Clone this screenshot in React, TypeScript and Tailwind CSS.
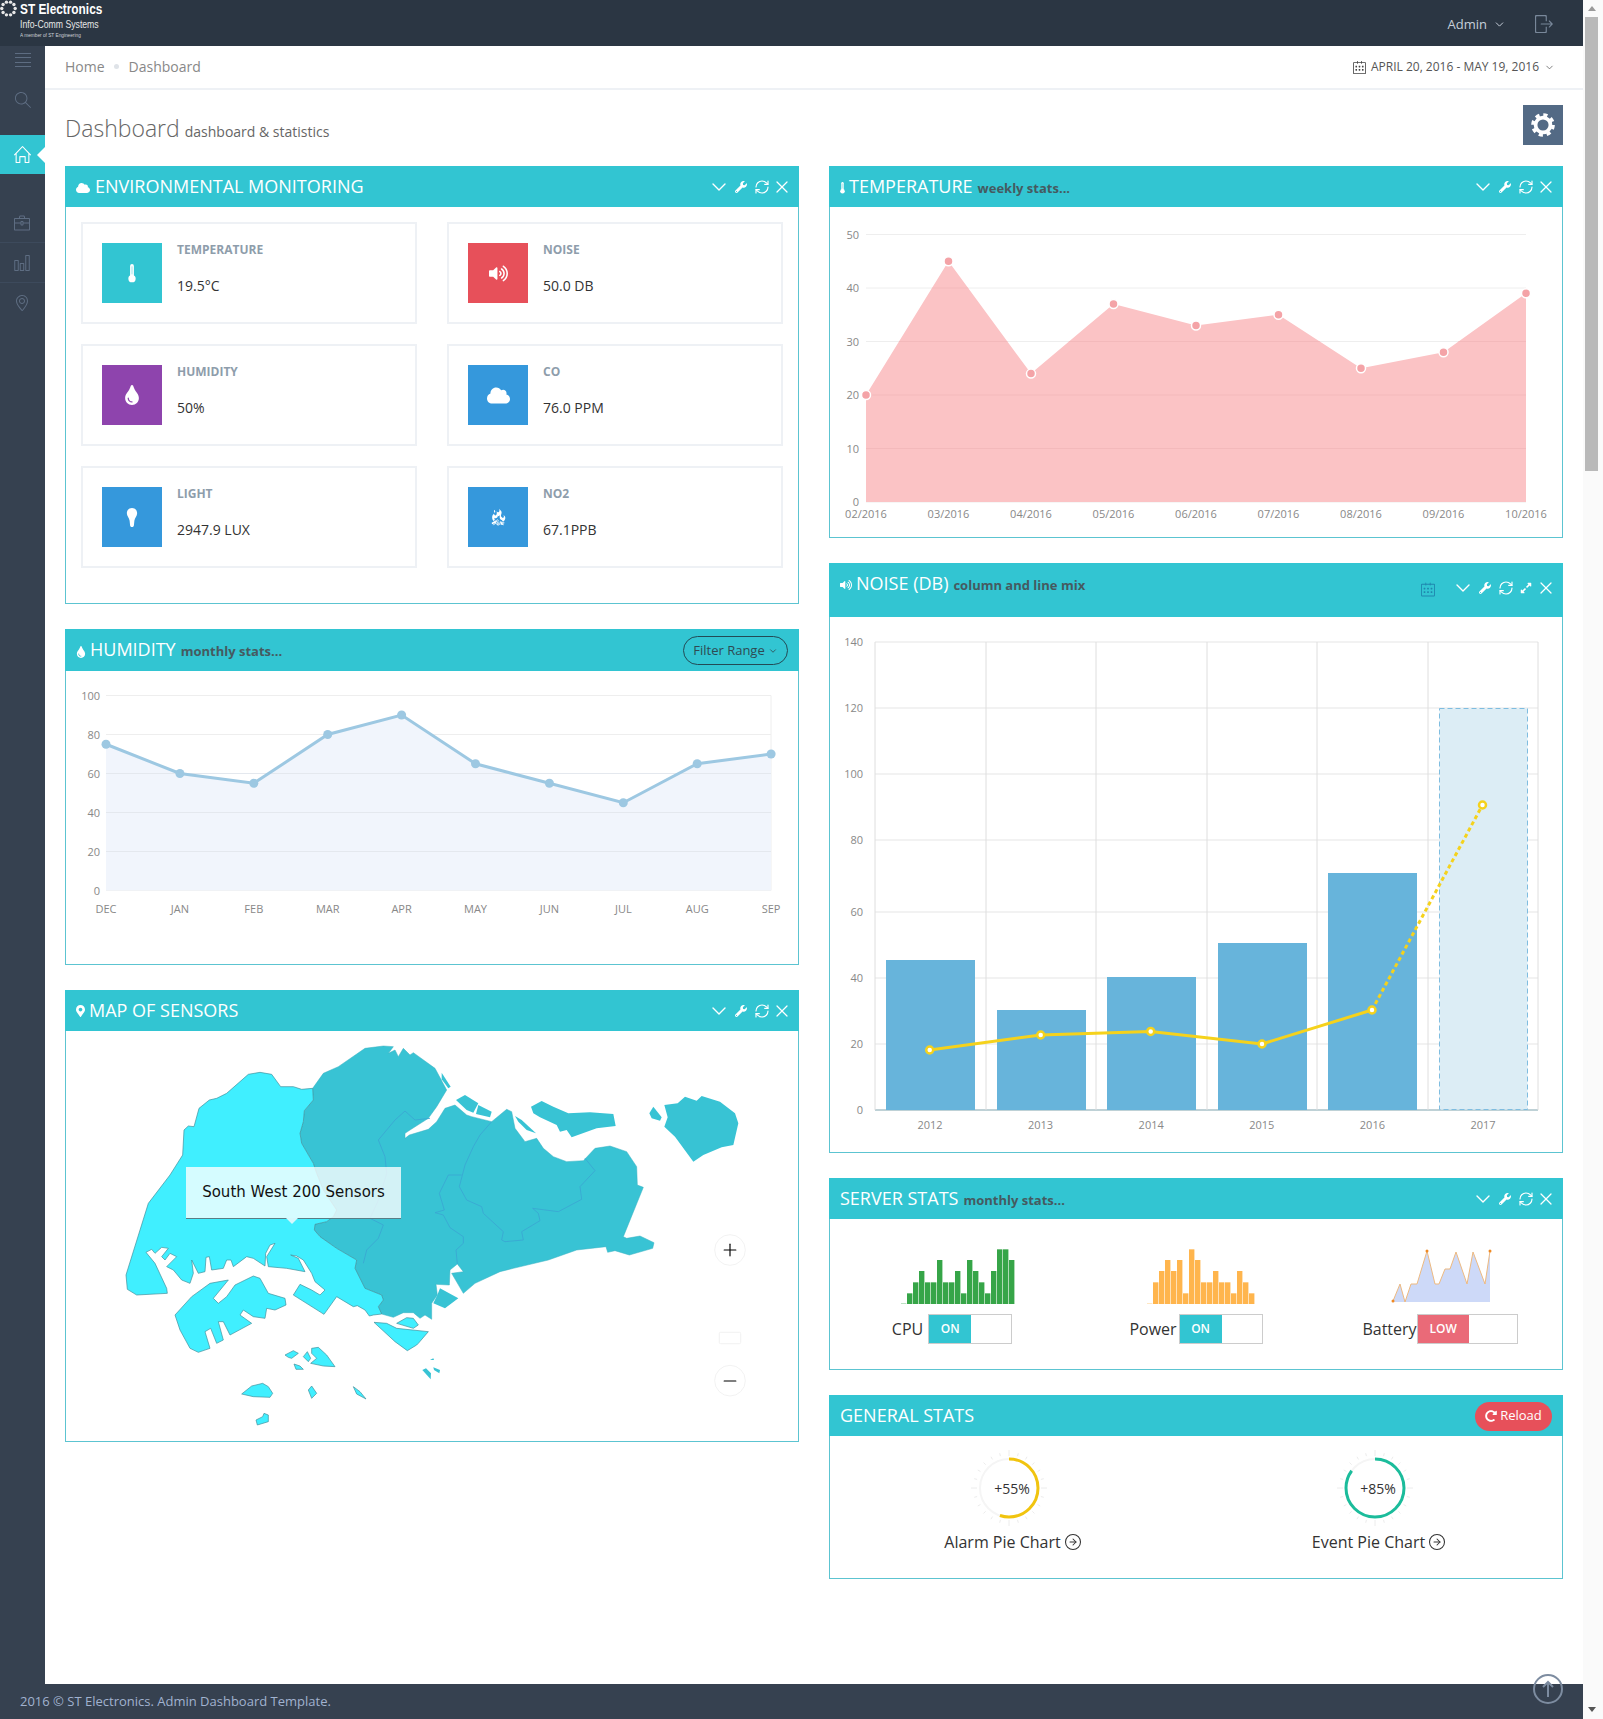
import React from "react";
import { ChevronDown, CircleArrowRight, Minus, Plus, RefreshCw, X } from "lucide-react";
import { FaCloud, FaExpandAlt, FaMapMarkerAlt, FaRedoAlt, FaTint, FaVolumeUp, FaWrench } from "react-icons/fa";
import { GiCampfire } from "react-icons/gi";
import { SlBriefcase, SlCalender, SlChart, SlHome, SlLocationPin, SlLogout, SlMagnifier } from "react-icons/sl";

const Thermometer = ({ className = "" }: { className?: string }) => (
  <svg viewBox="0 0 10 24" className={className} fill="currentColor">
    <rect x="2.6" y="0" width="4.8" height="17" rx="2.4" />
    <circle cx="5" cy="18.5" r="4.6" />
    <rect x="4.4" y="3" width="1.2" height="10" fill="#32c5d2" opacity="0.5" />
  </svg>
);

const Bulb = ({ className = "" }: { className?: string }) => (
  <svg viewBox="0 0 14 24" className={className} fill="currentColor">
    <path d="M7 0C3 0 .5 3 .5 6.5c0 3.5 3 6 3.5 9.500L4.500 21c0 2 1 3 2.500 3s2.500-1 2.500-3l.5-5c.5-3.500 3.500-6 3.500-9.500C13.500 3 11 0 7 0z" />
  </svg>
);

const Gear = () => (
  <svg viewBox="0 0 28 28" className="w-[26px] h-[26px]" fill="none" stroke="#fff">
    <circle cx="14" cy="14" r="8" strokeWidth="4" />
    <circle cx="14" cy="14" r="11" strokeWidth="3.500" strokeDasharray="4.500 4.140" />
  </svg>
);

const Tools = ({ expand = false }: { expand?: boolean }) => (
  <div className="flex items-center text-white -mr-[4px]">
    <div className="w-[25px] flex justify-center">
      <ChevronDown className="w-[24px] h-[24px] shrink-0" strokeWidth={1.4} />
    </div>
    <div className="w-[20px] flex justify-center">
      <FaWrench className="w-[12px] h-[12px]" />
    </div>
    <div className="w-[21px] flex justify-center">
      <RefreshCw className="w-[16px] h-[16px] shrink-0" strokeWidth={1.7} />
    </div>
    {expand && (
      <div className="w-[20px] flex justify-center">
        <FaExpandAlt className="w-[12px] h-[12px]" />
      </div>
    )}
    <div className="w-[20px] flex justify-center">
      <X className="w-[20px] h-[20px] shrink-0" strokeWidth={1.5} />
    </div>
  </div>
);

type PortletProps = {
  icon?: React.ReactNode;
  title: string;
  sub?: string;
  right?: React.ReactNode;
  headerClass?: string;
  children: React.ReactNode;
};

const Portlet = ({ icon, title, sub, right, headerClass = "h-[41px]", children }: PortletProps) => (
  <div className="border border-[#5cc4d1] pb-px mb-[25px]">
    <div className={`-mx-px -mt-px bg-[#32c5d2] flex justify-between pl-[11px] pr-[11px] ${headerClass}`}>
      <div className="flex items-center h-[41px]">
        {icon}
        <span className="text-white text-[18px]">{title}</span>
        {sub && <span className="text-[13px] font-bold text-[#455a60] ml-[5px] mt-[4px]">{sub}</span>}
      </div>
      <div className="flex items-center h-[41px]">{right || <Tools />}</div>
    </div>
    {children}
  </div>
);

const stats = [
  { name: "TEMPERATURE", value: "19.5°C", color: "bg-[#32c5d2]", icon: <Thermometer className="w-[10px] h-[19px]" /> },
  { name: "NOISE", value: "50.0 DB", color: "bg-[#e7505a]", icon: <FaVolumeUp className="w-[19px] h-[19px]" /> },
  { name: "HUMIDITY", value: "50%", color: "bg-[#8e44ad]", icon: <FaTint className="w-[20px] h-[20px]" /> },
  { name: "CO", value: "76.0 PPM", color: "bg-[#3598dc]", icon: <FaCloud className="w-[23px] h-[23px]" /> },
  { name: "LIGHT", value: "2947.9 LUX", color: "bg-[#3598dc]", icon: <Bulb className="w-[12px] h-[19px]" /> },
  { name: "NO2", value: "67.1PPB", color: "bg-[#3598dc]", icon: <GiCampfire className="w-[18px] h-[18px]" /> },
];

const EnvCard = ({ s }: { s: (typeof stats)[number] }) => (
  <div className="border-2 border-[#eef1f5] h-[102px] p-[19px] flex">
    <div className={`w-[60px] h-[60px] flex items-center justify-center text-white ${s.color}`}>{s.icon}</div>
    <div className="ml-[15px]">
      <div className="text-[12px] leading-[14px] font-bold text-[#8e9dab]">{s.name}</div>
      <div className="text-[14px] leading-[14px] text-[#333] mt-[22px]">{s.value}</div>
    </div>
  </div>
);

const axis = "fill-[#888] text-[11px]";

const tempVals = [20, 45, 24, 37, 33, 35, 25, 28, 39];
const tempLabels = ["02/2016", "03/2016", "04/2016", "05/2016", "06/2016", "07/2016", "08/2016", "09/2016", "10/2016"];

const TemperatureChart = () => {
  const pts = tempVals.map((v, i) => [866 + i * 82.5, 502 - v * 5.35]);
  const line = pts.map(p => p.join(",")).join(" ");
  return (
    <svg viewBox="830 207 731 329" className="w-[731px] h-[329px] block">
      {[0, 10, 20, 30, 40, 50].map(v => (
        <g key={v}>
          <line x1="866" x2="1526" y1={502 - v * 5.35} y2={502 - v * 5.35} stroke="#eee" />
          <text x="859" y={506 - v * 5.35} textAnchor="end" className={axis}>
            {v}
          </text>
        </g>
      ))}
      <polygon points={`866,502 ${line} 1526,502`} fill="#fbc3c5" />
      <clipPath id="tempArea">
        <polygon points={`866,502 ${line} 1526,502`} />
      </clipPath>
      <g clipPath="url(#tempArea)">
        {[10, 20, 30, 40].map(v => (
          <line key={v} x1="866" x2="1526" y1={502 - v * 5.35} y2={502 - v * 5.35} stroke="#f3b9bb" />
        ))}
      </g>
      {pts.map((p, i) => (
        <circle key={i} cx={p[0]} cy={p[1]} r="4.500" fill="#f4a3a7" stroke="#fff" strokeWidth="1.500" />
      ))}
      {tempLabels.map((l, i) => (
        <text key={l} x={866 + i * 82.5} y="518" textAnchor="middle" className={axis}>
          {l}
        </text>
      ))}
    </svg>
  );
};

const humVals = [75, 60, 55, 80, 90, 65, 55, 45, 65, 70];
const humLabels = ["DEC", "JAN", "FEB", "MAR", "APR", "MAY", "JUN", "JUL", "AUG", "SEP"];

const HumidityChart = () => {
  const pts = humVals.map((v, i) => [106 + i * 73.9, 890 - v * 1.95]);
  const line = pts.map(p => p.join(",")).join(" ");
  return (
    <svg viewBox="66 670.500 732 292" className="w-[732px] h-[292px] block">
      {[0, 20, 40, 60, 80, 100].map(v => (
        <g key={v}>
          <line x1="106" x2="771" y1={890 - v * 1.95} y2={890 - v * 1.95} stroke="#eee" />
          <text x="100" y={894 - v * 1.95} textAnchor="end" className={axis}>
            {v}
          </text>
        </g>
      ))}
      <line x1="771" x2="771" y1="695" y2="890" stroke="#eee" />
      <polygon points={`106,890 ${line} 771,890`} fill="#f1f5fc" />
      {[20, 40, 60].map(v => (
        <line key={v} x1="106" x2="771" y1={890 - v * 1.95} y2={890 - v * 1.95} stroke="#e4e8ee" />
      ))}
      <polyline points={line} fill="none" stroke="#9dc8e2" strokeWidth="3" />
      {pts.map((p, i) => (
        <circle key={i} cx={p[0]} cy={p[1]} r="4.500" fill="#9dc8e2" />
      ))}
      {humLabels.map((l, i) => (
        <text key={l} x={106 + i * 73.9} y="912" textAnchor="middle" className={axis}>
          {l}
        </text>
      ))}
    </svg>
  );
};

const noiseTicks = [
  [140, 642],
  [120, 708],
  [100, 774],
  [80, 840],
  [60, 912],
  [40, 978],
  [20, 1044],
  [0, 1110],
];
const noiseBars = [
  [886, 960],
  [997, 1010],
  [1107, 977],
  [1218, 943],
  [1328, 873],
];
const noiseLine = [
  [929.7, 1050],
  [1040.7, 1035],
  [1150.7, 1031.4],
  [1262, 1044],
  [1372, 1010],
];

const NoiseChart = () => (
  <svg viewBox="830 617 731 534" className="w-[731px] h-[534px] block">
    {noiseTicks.map(([v, y]) => (
      <g key={v}>
        <line x1="875" x2="1538" y1={y} y2={y} stroke={v === 0 ? "#7fa3ad" : "#e5e5e5"} />
        <text x="863" y={y + 4} textAnchor="end" className={axis}>
          {v}
        </text>
      </g>
    ))}
    {[875, 986, 1096, 1207, 1317, 1428, 1538].map(x => (
      <line key={x} x1={x} x2={x} y1="642" y2="1110" stroke="#dedede" />
    ))}
    {noiseBars.map(([x, y]) => (
      <rect key={x} x={x} y={y} width="89" height={1110 - y} fill="#67b4db" />
    ))}
    <rect x="1439.500" y="708.500" width="88" height="401" fill="#dcedf5" stroke="#7fbde0" strokeDasharray="5 3" />
    <polyline points={noiseLine.map(p => p.join(",")).join(" ")} fill="none" stroke="#f5d21c" strokeWidth="3" />
    <line x1="1372" y1="1010" x2="1482.500" y2="805" stroke="#f5d21c" strokeWidth="3" strokeDasharray="4 3" />
    {[...noiseLine, [1482.5, 805]].map((p, i) => (
      <circle key={i} cx={p[0]} cy={p[1]} r="3.500" fill="#fff" stroke="#f5d21c" strokeWidth="2.500" />
    ))}
    {["2012", "2013", "2014", "2015", "2016", "2017"].map((l, i) => (
      <text key={l} x={930 + i * 110.6} y="1129" textAnchor="middle" className={axis}>
        {l}
      </text>
    ))}
  </svg>
);

// paths are in the map's own units, 3 per screen pixel
const mainSW =
  "M18 705 85 490 150 405 188 345 192 270 205 258 222 260 237 205 268 180 290 175 320 160 385 103 420 97 455 103 482 140 520 140 545 148 578 145 580 180 553 212 550 245 540 280 545 310 580 370 590 400 610 450 650 510 640 530 620 545 585 553 583 570 600 590 650 625 710 660 705 685 735 745 785 765 790 780 775 800 785 822 760 825 748 828 735 810 712 797 700 800 650 770 612 823 520 765 540 733 575 750 600 765 615 750 585 725 575 700 550 660 530 648 512 645 535 655 555 695 500 685 445 680 440 650 465 610 450 615 437 640 435 678 400 655 380 650 360 665 340 680 333 660 320 660 310 685 275 690 268 650 258 652 255 695 235 700 215 660 220 700 210 730 185 720 160 690 140 680 170 650 150 640 135 660 125 650 145 625 125 622 105 640 95 628 78 637 105 670 140 745 142 760 50 765 22 748Z";
const jurong =
  "M165 825 215 770 270 730 325 720 280 775 295 790 320 770 345 735 400 708 420 715 445 760 495 775 498 795 465 810 440 805 435 835 400 830 370 810 360 825 395 850 330 885 310 845 295 845 310 900 290 910 272 865 255 875 270 925 235 937 210 925 180 870Z";
const swIslands = [
  "M762 847 800 850 830 865 925 875 895 910 890 915 862 932 825 905Z",
  "M830 850 860 833 880 835 895 855 880 865Z",
  "M495 945 520 932 535 940 515 955 505 952Z",
  "M550 950 562 935 572 955 565 965Z",
  "M575 925 595 922 620 945 645 980 610 978 572 970 590 955 575 940Z",
  "M522 972 540 978 550 988 528 988Z",
  "M365 1062 395 1038 428 1030 445 1040 458 1060 450 1072 400 1070Z",
  "M565 1050 575 1038 590 1060 575 1075Z",
  "M700 1040 720 1055 738 1077 710 1062Z",
  "M408 1140 428 1130 432 1120 445 1125 445 1145 412 1155Z",
];
const mainTeal =
  "M578 145 610 100 655 80 735 25 790 18 820 20 805 40 825 30 835 50 850 25 870 45 880 38 945 85 980 150 950 200 925 235 870 270 855 280 855 295 868 285 925 268 950 245 975 205 1005 195 1040 225 1055 230 1115 245 1160 208 1175 215 1185 265 1215 305 1250 295 1270 325 1300 350 1340 365 1390 362 1425 325 1470 318 1520 335 1550 380 1552 435 1570 442 1510 590 1520 595 1560 588 1602 608 1598 625 1528 645 1485 632 1463 637 1458 620 1370 630 1285 660 1180 685 1140 695 1065 730 1030 760 995 700 1030 695 1012 672 990 690 988 735 948 733 952 765 935 790 935 838 915 825 900 835 880 818 850 818 820 832 785 822 775 800 790 780 785 765 735 745 705 685 710 660 650 625 600 590 583 570 585 553 620 545 640 530 650 510 610 450 590 400 580 370 545 310 540 280 550 245 553 212 580 180Z";
const tealIslands = [
  "M960 745 1015 775 975 805 940 790 952 765Z",
  "M965 98 992 140 985 145 965 118Z",
  "M1008 180 1035 165 1075 190 1060 218 1040 210Z",
  "M1075 195 1115 215 1110 232 1068 222Z",
  "M1185 228 1205 240 1248 280 1220 270 1195 245Z",
  "M1233 200 1265 183 1300 200 1345 220 1410 217 1480 222 1487 258 1430 265 1355 292 1340 270 1320 275 1310 255 1260 232 1240 220Z",
  "M1633 195 1673 190 1695 170 1730 182 1745 168 1800 185 1845 220 1855 250 1840 315 1805 322 1750 345 1720 365 1665 290 1633 260 1643 232Z",
  "M1600 200 1625 232 1620 242 1595 235 1588 220Z",
  "M907 990 918 985 933 1000 932 1018Z",
  "M940 982 960 990 958 1000 942 990Z",
  "M930 960 940 955 942 960Z",
];
const zones = [
  "M775 300 825 240 855 213 885 240 930 235M775 300 795 350 800 400 780 470 750 535 790 555 775 595 740 630 730 670",
  "M1115 245 1080 285 1060 320 1035 375 1018 440 1040 480 1085 500 1090 520 1150 575 1145 600 1155 605 1210 600 1205 575 1260 542 1255 520 1238 505 1315 515 1385 478 1380 440 1425 392 1395 355",
  "M1025 405 985 405 958 460 973 510 945 518 970 525 990 563 1030 590 1030 610 1008 630 1012 672",
];

const SensorMap = () => (
  <div className="relative h-[409px] overflow-hidden">
    <svg viewBox="-162 -27 2196 1230" className="w-[732px] h-[410px] block">
      <path d={mainTeal} fill="#38c3d4" stroke="#38b0c0" strokeWidth="1.500" />
      {tealIslands.map(d => (
        <path key={d} d={d} fill="#38c3d4" />
      ))}
      {zones.map(d => (
        <path key={d} d={d} fill="none" stroke="#3aa6d2" strokeWidth="2.500" />
      ))}
      <path d={mainSW} fill="#40efff" stroke="#3f8c98" strokeWidth="2" />
      <path d={jurong} fill="#40efff" stroke="#3f8c98" strokeWidth="2" />
      {swIslands.map(d => (
        <path key={d} d={d} fill="#40efff" stroke="#3f8c98" strokeWidth="2" />
      ))}
      <g fill="#fff" stroke="#ececec" strokeWidth="2">
        <circle cx="1830" cy="630" r="46" />
        <rect x="1798" y="877" width="64" height="34" rx="3" />
        <circle cx="1830" cy="1022" r="46" />
      </g>
    </svg>
    <Plus className="absolute left-[654px] top-[209px] w-[20px] h-[20px] text-black" strokeWidth={1.4} />
    <Minus className="absolute left-[654px] top-[340px] w-[20px] h-[20px] text-black" strokeWidth={1.4} />
    <div className="absolute left-[120px] top-[136px] w-[215px] h-[52px] bg-[#ffffffc7] border-b border-[#5a7d85] flex items-center justify-center text-[15px] text-[#111] font-['DejaVu_Sans',sans-serif]">
      South West 200 Sensors
      <div className="absolute left-[100px] -bottom-[6px] w-0 h-0 border-x-[6px] border-x-transparent border-t-[6px] border-t-[#d6f8fc]" />
    </div>
  </div>
);

const cpuBars = [1, 32, 65, 99, 65, 65, 132, 65, 65, 99, 32, 132, 99, 65, 32, 99, 164, 164, 132];
const powerBars = [1, 65, 99, 132, 99, 132, 32, 164, 132, 65, 65, 99, 65, 65, 32, 99, 65, 32];

const Bars = ({ data, color, className }: { data: number[]; color: string; className: string }) => (
  <svg viewBox={`0 0 ${data.length * 6} 55`} width={data.length * 6} height="55" className={`block ${className}`}>
    {data.map((h, i) => (
      <rect key={i} x={i * 6} y={55 - h / 3} width="5.400" height={h / 3} fill={color} />
    ))}
  </svg>
);

const battery = [
  [0, 50],
  [7, 33],
  [12, 51],
  [18, 33],
  [24, 33],
  [34, 0],
  [42, 33],
  [46, 33],
  [52, 18],
  [57, 18],
  [63, 1],
  [74, 33],
  [80, 1],
  [92, 33],
  [97, 0],
];

const BatteryLine = () => (
  <svg viewBox="-2 -2 102 55" width="102" height="55" className="block ml-[3px]">
    <polygon points={`0,51 ${battery.map(p => p.join(",")).join(" ")} 97,51`} fill="#cdd9f8" />
    <polyline points={battery.map(p => p.join(",")).join(" ")} fill="none" stroke="#edb980" strokeWidth="1" />
    <circle cx="0" cy="50" r="1.500" fill="#f08a24" />
    <circle cx="34" cy="0" r="1.500" fill="#f08a24" />
    <circle cx="97" cy="0" r="1.500" fill="#f08a24" />
  </svg>
);

const Toggle = ({ text, on = true }: { text: string; on?: boolean }) => (
  <div className={`flex h-[30px] border border-[#ccc] ${on ? "w-[84px]" : "w-[101px]"}`}>
    <div
      className={`flex items-center justify-center text-white text-[12px] font-semibold ${
        on ? "w-[42px] bg-[#32c5d2]" : "w-[51px] bg-[#ea6a78]"
      }`}
    >
      {text}
    </div>
  </div>
);

const Gauge = ({ pct, color }: { pct: number; color: string }) => {
  const c = 2 * Math.PI * 29;
  return (
    <div className="relative w-[76px] h-[76px] mr-[8px]">
      <svg viewBox="-38 -38 76 76" className="w-[76px] h-[76px] block">
        {Array.from({ length: 24 }).map((_, i) => {
          const a = (i * 15 * Math.PI) / 180;
          const inner = i % 6 === 0 ? 32 : 33;
          const outer = i % 6 === 0 ? 38 : 36;
          return (
            <line
              key={i}
              x1={Math.cos(a) * inner}
              y1={Math.sin(a) * inner}
              x2={Math.cos(a) * outer}
              y2={Math.sin(a) * outer}
              stroke="#ececec"
            />
          );
        })}
        <circle r="29" fill="none" stroke="#f5f5f5" strokeWidth="2" />
        <circle
          r="29"
          fill="none"
          stroke={color}
          strokeWidth="3"
          strokeDasharray={`${c * pct} ${c}`}
          transform="rotate(-90)"
        />
      </svg>
      <div className="absolute inset-0 pl-[6px] flex items-center justify-center text-[14px] text-[#333]">
        +{Math.round(pct * 100)}%
      </div>
    </div>
  );
};

const GaugeCol = ({ pct, color, label }: { pct: number; color: string; label: string }) => (
  <div className="flex flex-col items-center">
    <Gauge pct={pct} color={color} />
    <div className="flex items-center text-[16px] text-[#333] mt-[4px]">
      {label}
      <CircleArrowRight className="w-[18px] h-[18px] ml-[3px]" strokeWidth={1.4} />
    </div>
  </div>
);

const Sidebar = () => (
  <div className="w-[45px] shrink-0 bg-[#364150] text-[#5e6d82]">
    <div className="h-[89px] pt-[7px] flex flex-col items-center">
      <div className="w-[16px] h-[14px] flex flex-col justify-between">
        <div className="h-px bg-[#5e6d82]" />
        <div className="h-px bg-[#5e6d82]" />
        <div className="h-px bg-[#5e6d82]" />
        <div className="h-px bg-[#5e6d82]" />
      </div>
      <SlMagnifier className="w-[16px] h-[16px] mt-[25px]" />
    </div>
    <div className="relative h-[39px] bg-[#32c5d2] flex items-center justify-center text-white">
      <SlHome className="w-[17px] h-[17px] mr-[1px]" />
      <div className="absolute right-0 top-[12px] w-0 h-0 border-y-[8px] border-y-transparent border-r-[8px] border-r-white" />
    </div>
    <div className="h-[29px]" />
    <div className="h-[40px] flex items-center justify-center border-b border-[#3d4a5c]">
      <SlBriefcase className="w-[16px] h-[16px] mr-[1px]" />
    </div>
    <div className="h-[40px] flex items-center justify-center border-b border-[#3d4a5c]">
      <SlChart className="w-[16px] h-[16px] mr-[1px]" />
    </div>
    <div className="h-[40px] flex items-center justify-center">
      <SlLocationPin className="w-[16px] h-[16px] mr-[1px]" />
    </div>
  </div>
);

const Logo = () => (
  <div className="flex items-start h-[46px] w-[120px] text-white">
    <svg viewBox="-8 -8 16 16" className="w-[17px] h-[17px] shrink-0">
      {Array.from({ length: 10 }).map((_, i) => {
        const a = (i * 36 * Math.PI) / 180;
        return <circle key={i} cx={Math.cos(a) * 6.3} cy={Math.sin(a) * 6.3} r="1.600" fill="#e8e8e8" />;
      })}
    </svg>
    <div className="ml-[3px] origin-left scale-x-[0.79] font-['Liberation_Sans',sans-serif]">
      <div className="text-[15px] leading-[17px] font-bold whitespace-nowrap">ST Electronics</div>
      <div className="text-[11px] leading-[12px] mt-[1px] whitespace-nowrap text-[#e6e6e6]">Info-Comm Systems</div>
      <div className="text-[6px] leading-[8px] mt-[1px] whitespace-nowrap text-[#cfd3d8]">A member of ST Engineering</div>
    </div>
  </div>
);

const Scrollbar = () => (
  <div className="w-[20px] shrink-0 bg-[#fafafa] pr-[3px] flex flex-col items-center">
    <div className="w-0 h-0 mt-[6px] border-x-[4px] border-x-transparent border-b-[5px] border-b-[#9a9a9a]" />
    <div className="w-[13px] h-[454px] bg-[#b9b9b9] mt-[6px]" />
    <div className="flex-1" />
    <div className="w-0 h-0 mb-[7px] border-x-[4px] border-x-transparent border-t-[5px] border-t-[#555]" />
  </div>
);

export default function App() {
  return (
    <div className="relative h-[1719px] flex overflow-hidden bg-white text-[#333] font-['Open_Sans',sans-serif]">
      <div className="flex-1 flex flex-col min-w-0">
        <div className="h-[46px] bg-[#2b3643] flex justify-between shrink-0">
          <Logo />
          <div className="flex items-center pr-[30px] pt-[3px] text-[#c6cfda]">
            <span className="text-[13px]">Admin</span>
            <ChevronDown className="w-[13px] h-[13px] ml-[6px]" strokeWidth={1.8} />
            <SlLogout className="w-[18px] h-[18px] ml-[29px] -mt-[1px] -scale-x-100 text-[#79889a]" />
          </div>
        </div>
        <div className="flex flex-1 min-h-0">
          <Sidebar />
          <div className="flex-1 min-w-0">
            <div className="h-[44px] border-b-2 border-[#eef1f5] flex items-center justify-between pl-[20px] pr-[28px]">
              <div className="flex items-center text-[14px] text-[#888] -mt-[2px]">
                Home
                <span className="w-[5px] h-[5px] rounded-full bg-[#dfe3e8] ml-[9px] mr-[10px]" />
                Dashboard
              </div>
              <div className="flex items-center text-[12px] text-[#555]">
                <SlCalender className="w-[13px] h-[13px] mr-[5px] text-[#444]" />
                APRIL 20, 2016 - MAY 19, 2016
                <ChevronDown className="w-[11px] h-[11px] ml-[5px]" strokeWidth={1.6} />
              </div>
            </div>
            <div className="h-[76px] flex justify-between items-start pl-[20px] pr-[20px] pt-[15px]">
              <div className="flex items-baseline mt-[6px] text-[#666]">
                <span className="text-[23px] font-light">Dashboard</span>
                <span className="text-[14px] ml-[5px]">dashboard &amp; statistics</span>
              </div>
              <div className="w-[40px] h-[40px] bg-[#536a85] flex items-center justify-center">
                <Gear />
              </div>
            </div>
            <div className="grid grid-cols-2 gap-x-[30px] pl-[20px] pr-[20px]">
              <div>
                <Portlet icon={<FaCloud className="w-[14px] h-[14px] text-white mr-[5px] mt-[2px]" />} title="ENVIRONMENTAL MONITORING">
                  <div className="grid grid-cols-2 gap-x-[30px] gap-y-[20px] pt-[15px] px-[15px] pb-[34px]">
                    {stats.map(s => (
                      <EnvCard key={s.name} s={s} />
                    ))}
                  </div>
                </Portlet>
                <Portlet
                  icon={<FaTint className="w-[10px] h-[12px] text-white mr-[4px] mt-[4px]" />}
                  title="HUMIDITY"
                  sub="monthly stats..."
                  headerClass="h-[42px]"
                  right={
                    <div className="mt-[2px] h-[29px] w-[105px] border border-[#234a55] rounded-full flex items-center justify-center text-[13px] text-[#2f4a52]">
                      Filter Range
                      <ChevronDown className="w-[10px] h-[10px] ml-[3px]" strokeWidth={2} />
                    </div>
                  }
                >
                  <HumidityChart />
                </Portlet>
                <Portlet icon={<FaMapMarkerAlt className="w-[9px] h-[12px] text-white mr-[4px] mt-[1px]" />} title="MAP OF SENSORS">
                  <SensorMap />
                </Portlet>
              </div>
              <div>
                <Portlet
                  icon={<Thermometer className="w-[5px] h-[12px] text-white mr-[4px] mt-[2px]" />}
                  title="TEMPERATURE"
                  sub="weekly stats..."
                >
                  <TemperatureChart />
                </Portlet>
                <Portlet
                  icon={<FaVolumeUp className="w-[12px] h-[12px] text-white mr-[4px] mt-[3px]" />}
                  title="NOISE (DB)"
                  sub="column and line mix"
                  headerClass="h-[54px]"
                  right={
                    <div className="flex items-center pt-[9px]">
                      <SlCalender className="w-[14px] h-[15px] text-[#1f86ad] mr-[15px] mt-[2px]" />
                      <Tools expand />
                    </div>
                  }
                >
                  <NoiseChart />
                </Portlet>
                <Portlet title="SERVER STATS" sub="monthly stats...">
                  <div className="grid grid-cols-3 h-[149px] pt-[30px]">
                    <div className="flex flex-col items-center">
                      <Bars data={cpuBars} color="#36a548" className="ml-[12px]" />
                      <div className="flex items-center mt-[10px] text-[16px]">
                        <span className="mr-[5px]">CPU</span>
                        <Toggle text="ON" />
                      </div>
                    </div>
                    <div className="flex flex-col items-center">
                      <Bars data={powerBars} color="#ffb54d" className="ml-[10px]" />
                      <div className="flex items-center mt-[10px] text-[16px]">
                        <span className="mr-[2px]">Power</span>
                        <Toggle text="ON" />
                      </div>
                    </div>
                    <div className="flex flex-col items-center">
                      <BatteryLine />
                      <div className="flex items-center mt-[10px] text-[16px]">
                        <span>Battery</span>
                        <Toggle text="LOW" on={false} />
                      </div>
                    </div>
                  </div>
                </Portlet>
                <Portlet
                  title="GENERAL STATS"
                  right={
                    <div className="h-[29px] w-[77px] mt-[1px] rounded-full bg-[#e7505a] flex items-center justify-center text-white text-[13px]">
                      <FaRedoAlt className="w-[12px] h-[12px] mr-[3px]" />
                      Reload
                    </div>
                  }
                >
                  <div className="grid grid-cols-2 h-[141px] pt-[14px]">
                    <GaugeCol pct={0.55} color="#f1c40f" label="Alarm Pie Chart" />
                    <GaugeCol pct={0.85} color="#1bbc9b" label="Event Pie Chart" />
                  </div>
                </Portlet>
              </div>
            </div>
          </div>
        </div>
        <div className="h-[35px] bg-[#364150] shrink-0 flex items-center pl-[20px] text-[13px] text-[#a1b2cf]">
          2016 © ST Electronics. Admin Dashboard Template.
        </div>
      </div>
      <Scrollbar />
      <svg viewBox="0 0 30 30" className="absolute left-[1533px] top-[1674px] w-[30px] h-[30px]" fill="none" stroke="#7d8ca0" strokeWidth="2">
        <circle cx="15" cy="15" r="14" />
        <path d="M15 23V8M10 13l5-5 5 5" />
      </svg>
    </div>
  );
}
